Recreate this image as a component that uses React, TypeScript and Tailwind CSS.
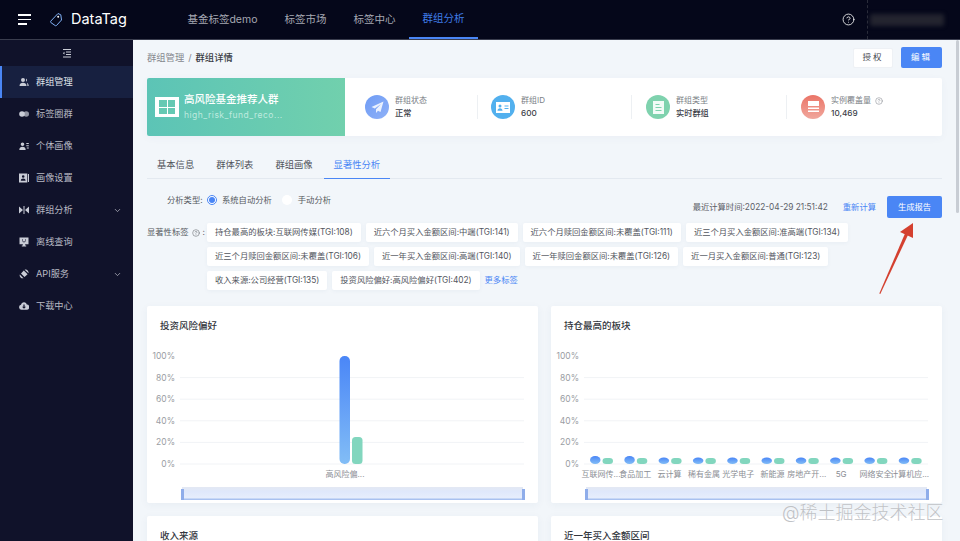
import { ChevronDown, CircleHelp } from "lucide-react";

const fontStack = "font-['Inter','Noto_Sans_CJK_SC',sans-serif]";

const navItems = ["基金标签demo", "标签市场", "标签中心"];

const sideItems = [
    { label: "群组管理", icon: "users", active: true },
    { label: "标签圈群", icon: "circles" },
    { label: "个体画像", icon: "person" },
    { label: "画像设置", icon: "card" },
    { label: "群组分析", icon: "bow", arrow: true },
    { label: "离线查询", icon: "screen" },
    { label: "API服务", icon: "api", arrow: true },
    { label: "下载中心", icon: "cloud" },
];

const tagRows = [
    ["持仓最高的板块:互联网传媒(TGI:108)", "近六个月买入金额区间:中端(TGI:141)", "近六个月赎回金额区间:未覆盖(TGI:111)", "近三个月买入金额区间:准高端(TGI:134)"],
    ["近三个月赎回金额区间:未覆盖(TGI:106)", "近一年买入金额区间:高端(TGI:140)", "近一年赎回金额区间:未覆盖(TGI:126)", "近一月买入金额区间:普通(TGI:123)"],
    ["收入来源:公司经营(TGI:135)", "投资风险偏好:高风险偏好(TGI:402)"],
];

const sectors = ["互联网传...", "食品加工", "云计算", "稀有金属", "光学电子", "新能源", "房地产开...", "5G", "网络安全", "计算机应..."];

function SideIcon({ name }: { name: string }) {
    const c = "#c9ccd6";
    return (
        <svg width="10" height="10" viewBox="0 0 10 10" fill={c} className="shrink-0">
            {name === "users" && <path d="M4 1a2 2 0 1 1 0 4 2 2 0 0 1 0-4zM0.5 9c0-2 1.5-3.2 3.5-3.2S7.5 7 7.5 9zM7 1.5a1.8 1.8 0 0 1 0 3.2zM8 5.8c1 .4 1.7 1.6 1.7 3.2H8.4c0-1.300-.2-2.400-.4-3.200z" />}
            {name === "circles" && <><circle cx="3" cy="5" r="2.800" /><circle cx="7.200" cy="5" r="2.800" fillOpacity="0.7" /></>}
            {name === "person" && <path d="M3.500 1.500a1.800 1.800 0 1 1 0 3.600 1.800 1.800 0 0 1 0-3.600zM0.300 9c0-2 1.300-3.200 3.200-3.200S6.700 7 6.700 9zM7.300 2h2.500v1H7.300zM7.300 4.300h2.500v1H7.300zM7.800 6.600h2v1h-2z" />}
            {name === "card" && <path fillRule="evenodd" d="M0 .5h8.300v9H0zM4.200 2.200a1.300 1.300 0 1 0 0 2.600 1.300 1.300 0 0 0 0-2.600zM1.800 7.800h4.800c0-1.400-1-2.300-2.400-2.300s-2.400.9-2.400 2.300zM9 1h1v8H9z" />}
            {name === "bow" && <path d="M0 1.500l4 3.500-4 3.500zM10 1.500L6 5l4 3.500zM4.500 1h1v8h-1z" />}
            {name === "screen" && <path fillRule="evenodd" d="M.5.500h9v6.800H6.200v1.200h1V9.500H2.800V8.500h1V7.300H.5zM3 2.500v1h1v-1zM6 2.500v1h1v-1zM3 4.500c.5 1 3.500 1 4 0z" />}
            {name === "api" && <path d="M6.500.5a3.200 3.200 0 0 1 3 3.800L5.700 .8c.2-.2.500-.3.800-.3zM4.800 1.500l3.800 3.800L5.500 8 2 4.500zM.8 5.500l3.700 3.700A3 3 0 0 1 .8 5.500z" />}
            {name === "cloud" && <path fillRule="evenodd" d="M5 1.200c1.500 0 2.600 1 2.800 2.400A2.500 2.500 0 0 1 7.500 8.800h-5A2.600 2.600 0 0 1 2 3.700C2.400 2.200 3.500 1.200 5 1.200zM4.400 3.500v2.200H3L5 7.800l2-2.100H5.600V3.500z" />}
        </svg>
    );
}

function Stat({ title, value, color, help, width, dividerRight, children }: { title: string; value: string; color: string; help?: boolean; width: string; dividerRight?: string; children: React.ReactNode }) {
    return (
        <div className={`${width} h-[24px] flex items-center relative`}>
            <div className={`w-[24px] h-[24px] rounded-full flex items-center justify-center shrink-0 ${color}`}>{children}</div>
            <div className="ml-[6px] flex flex-col gap-[2px]">
                <div className="text-[8px] leading-[11px] text-[#7b7f86] flex items-center gap-[4px]">
                    {title}
                    {help && <CircleHelp size={8} strokeWidth={1.500} />}
                </div>
                <div className="text-[8.200px] leading-[11px] font-medium text-[#3c4048]">{value}</div>
            </div>
            {dividerRight && <div className={`absolute top-0 h-[24px] w-px bg-[#edf0f3] ${dividerRight}`} />}
        </div>
    );
}

function Tag({ text }: { text: string }) {
    return <span className="h-[19px] px-[8px] flex items-center bg-white rounded-[2px] text-[8.300px] text-[#52565e] whitespace-nowrap shadow-[0_1px_4px_rgba(40,70,120,0.05)]">{text}</span>;
}

function BarChart({ id, bars, labels }: { id: string; bars: { x: number; blue: number; green: number }[]; labels: { x: number; text: string }[] }) {
    const ticks = [100, 80, 60, 40, 20, 0];
    return (
        <svg width="391" height="156" viewBox="0 0 391 156" className="block">
            <defs>
                <linearGradient id={`${id}Bar`} x1="0" y1="0" x2="0" y2="1">
                    <stop offset="0" stopColor="#4a86f7" />
                    <stop offset="1" stopColor="#82bdf6" />
                </linearGradient>
                <linearGradient id={`${id}Band`} x1="0" y1="0" x2="0" y2="1">
                    <stop offset="0" stopColor="#e3e8f3" />
                    <stop offset="0.35" stopColor="#dfe8fb" />
                    <stop offset="1" stopColor="#e8effd" />
                </linearGradient>
            </defs>
            {ticks.map((t, i) => (
                <g key={t}>
                    <text x="28" y={12 + i * 21.600} textAnchor="end" fontSize="8.500" fill="#9a9da3">{t}%</text>
                    {i > 0 && <line x1="33" x2="377" y1={9 + i * 21.600} y2={9 + i * 21.600} stroke="#f1f3f6" strokeWidth="1" />}
                </g>
            ))}
            {bars.map((b) => (
                <g key={b.x}>
                    <rect x={b.x} y={117 - b.blue} width="10.500" height={b.blue} rx="5" fill={`url(#${id}Bar)`} />
                    <rect x={b.x + 12.500} y={117 - b.green} width="10.500" height={b.green} rx="3.500" fill="#82d6be" />
                </g>
            ))}
            {labels.map((l) => (
                <text key={l.x} x={l.x} y="130" textAnchor="middle" fontSize="8" fill="#8b8e94">{l.text}</text>
            ))}
            <rect x="35" y="140" width="341" height="13" fill={`url(#${id}Band)`} />
            <rect x="35" y="151.500" width="341" height="1.500" fill="#a8c1f0" />
            <rect x="34" y="142" width="3" height="11" fill="#8fadea" />
            <rect x="375" y="142" width="3" height="11" fill="#8fadea" />
        </svg>
    );
}

function Card({ title, children }: { title: string; children?: React.ReactNode }) {
    return (
        <div className="flex-1 bg-white rounded-[2px] shadow-[0_2px_8px_rgba(40,70,120,0.05)]">
            <div className="pl-[13px] pt-[14px] h-[27px] text-[9.500px] leading-[12px] font-medium text-[#33363d] box-content">{title}</div>
            {children}
        </div>
    );
}

export default function App() {
    const rightBars = Array.from({ length: 10 }, (_, i) => ({ x: 39 + i * 34.300, blue: i < 2 ? 8 : 6.500, green: 6 }));
    const rightLabels = sectors.map((text, i) => ({ x: 50 + i * 34.300, text }));

    return (
        <div className={`w-[960px] h-[541px] overflow-hidden relative flex flex-col bg-[#f2f6fa] ${fontStack}`}>
            <header className="h-[40px] shrink-0 bg-[#05071a] border-b border-[#3a3d4e] flex items-center relative">
                <div className="ml-[18px] w-[14px] flex flex-col gap-[3px]">
                    <span className="h-[1.500px] w-[13px] bg-white" />
                    <span className="h-[1.500px] w-[13px] bg-white" />
                    <span className="h-[1.500px] w-[9px] bg-white" />
                </div>
                <svg width="14" height="15" viewBox="0 0 14 15" fill="none" stroke="#7fb0f5" strokeWidth="1" className="ml-[17px]">
                    <path d="M9 1.500l2.800 1.300.7 5.200-5 5.500c-.5.400-1 .4-1.400 0L1.800 10.500c-.4-.5-.3-1 0-1.400z" />
                    <circle cx="9.200" cy="4.800" r="1" fill="#ffffff" stroke="none" />
                </svg>
                <span className="ml-[8px] text-[14.500px] leading-none text-white">DataTag</span>
                <nav className="ml-[47px] h-full flex items-center">
                    {navItems.map((item) => (
                        <span key={item} className="px-[13.500px] text-[10.500px] text-[#a5a8b2] whitespace-nowrap">{item}</span>
                    ))}
                    <span className="h-full px-[13.500px] flex items-center text-[10.500px] text-[#3f7ce6] border-b-2 border-[#4a86f5]">群组分析</span>
                </nav>
                <div className="ml-auto mr-[16px] flex items-center gap-[15px]">
                    <CircleHelp size={13} color="#ffffff" strokeWidth={1.500} />
                    <div className="w-[74px] h-[12px] rounded-[2px] bg-[#23242f] blur-[2px]" />
                </div>
                <div className="absolute left-[867px] top-0 h-full border-l border-dashed border-[#2a2c3a]" />
            </header>

            <div className="flex-1 flex min-h-0">
                <aside className="w-[133px] shrink-0 bg-[#10122a] text-[#b8bac4]">
                    <div className="h-[26px] flex items-center justify-center">
                        <svg width="10" height="9" viewBox="0 0 10 9" stroke="#c9ccd6" strokeWidth="1" fill="none">
                            <path d="M1 .5h8M4 3h5M4 5.500h5M1 8h8" />
                            <path d="M2.500 2.800L.8 4.200l1.700 1.400z" fill="#c9ccd6" stroke="none" />
                        </svg>
                    </div>
                    {sideItems.map((item) => (
                        <div key={item.label} className={`h-[32px] pl-[17px] pr-[11px] flex items-center gap-[7px] text-[9.200px] border-l-2 ${item.active ? "bg-[#172040] border-[#4a86f5] text-[#dfe1e8]" : "border-transparent"}`}>
                            <SideIcon name={item.icon} />
                            <span>{item.label}</span>
                            {item.arrow && <ChevronDown size={9} className="ml-auto" />}
                        </div>
                    ))}
                </aside>

                <main className="flex-1 min-w-0 pl-[14px] pr-[18px]">
                    <div className="h-[38px] pb-[3px] flex items-center justify-between">
                        <div className="flex items-center gap-[4px] text-[9.300px]">
                            <span className="text-[#85888e]">群组管理</span>
                            <span className="text-[#85888e]">/</span>
                            <span className="font-medium text-[#3a3d44]">群组详情</span>
                        </div>
                        <div className="flex items-center gap-[8px]">
                            <button className="w-[40px] h-[20px] bg-white rounded-[2px] text-[8.500px] tracking-[2px] text-[#44474e] border border-[#eef1f5]">授权</button>
                            <button className="w-[41px] h-[21px] bg-[#4a86f5] rounded-[2px] text-[8.500px] tracking-[2px] text-white">编辑</button>
                        </div>
                    </div>

                    <section className="h-[58px] bg-white rounded-[2px] flex items-center shadow-[0_2px_8px_rgba(40,70,120,0.04)]">
                        <div className="w-[198px] h-full rounded-l-[2px] bg-gradient-to-r from-[#5cc4b6] to-[#71d0ad] pl-[8px] flex items-center gap-[5px] shrink-0">
                            <div className="w-[24px] h-[20px] bg-white grid grid-cols-2 grid-rows-2 gap-[1px] px-[4px] py-[3px]">
                                <span className="bg-[#65c9b3]" />
                                <span className="bg-[#65c9b3]" />
                                <span className="bg-[#65c9b3]" />
                                <span className="bg-[#65c9b3]" />
                            </div>
                            <div className="flex flex-col gap-[2px]">
                                <span className="text-[10.500px] leading-[14px] font-medium text-white">高风险基金推荐人群</span>
                                <span className="text-[8.500px] leading-[12px] tracking-[0.500px] text-[#bfeadf]">high_risk_fund_reco...</span>
                            </div>
                        </div>
                        <div className="flex-1 pl-[20px] flex items-center">
                            <Stat width="w-[126px]" dividerRight="right-[13px]" title="群组状态" value="正常" color="bg-gradient-to-br from-[#6f9cf5] to-[#8fb1f7]">
                                <svg width="13" height="13" viewBox="0 0 13 13" fill="#eaf1fe"><path d="M12.500.5L.5 6l3.300 1.500L10 3 5 8.300v3.700l2-2.300 2.500 1.300z" /></svg>
                            </Stat>
                            <Stat width="w-[155px]" dividerRight="right-[14px]" title="群组ID" value="600" color="bg-[#52b0ee]">
                                <svg width="14" height="11" viewBox="0 0 14 11" fill="#ffffff"><path fillRule="evenodd" d="M0 0h14v11H0zM4 2.500a1.500 1.500 0 1 0 0 3 1.500 1.500 0 0 0 0-3zM1.500 8.800h5C6.500 7.300 5.500 6.300 4 6.300S1.500 7.300 1.500 8.800zM8.500 3.500v1h4v-1zM8.500 6v1h4V6z" /></svg>
                            </Stat>
                            <Stat width="w-[155px]" dividerRight="right-[14px]" title="群组类型" value="实时群组" color="bg-[#7fd2ae]">
                                <svg width="11" height="13" viewBox="0 0 11 13" fill="#ffffff"><path fillRule="evenodd" d="M0 0h11v13H0zM2.500 3v1h4V3zM2.500 6v1h6V6zM2.500 9v1h6V9z" fillOpacity="0.900" /></svg>
                            </Stat>
                            <Stat width="w-[125px]" title="实例覆盖量" value="10,469" help color="bg-gradient-to-b from-[#ea7467] to-[#f0a79d]">
                                <svg width="11" height="12" viewBox="0 0 11 12" fill="#ffffff"><path d="M0 0h11v5H0zM0 6.500h11V8H0zM0 9.500h11V11H0z" /></svg>
                            </Stat>
                        </div>
                    </section>

                    <div className="mt-[14px] h-[29px] flex items-end border-b border-[#e3e9f0] pl-[10px] text-[9.300px] text-[#50545b]">
                        <span className="h-[28px] pt-px flex items-center mr-[22px]">基本信息</span>
                        <span className="h-[28px] pt-px flex items-center mr-[22px]">群体列表</span>
                        <span className="h-[28px] pt-px flex items-center mr-[11px]">群组画像</span>
                        <span className="h-[29px] pt-px -mb-px px-[10px] flex items-center text-[#4a86f5] border-b border-[#4a86f5]">显著性分析</span>
                    </div>

                    <div className="mt-[17px] h-[22px] flex items-center text-[8.300px] text-[#565a61]">
                        <div className="mb-[14px] flex items-center">
                            <span className="ml-[20px] w-[40px] whitespace-nowrap">分析类型:</span>
                            <span className="w-[10px] h-[10px] rounded-full border border-[#4a86f5] flex items-center justify-center bg-white">
                                <span className="w-[6px] h-[6px] rounded-full bg-[#4a86f5]" />
                            </span>
                            <span className="ml-[5px]">系统自动分析</span>
                            <span className="ml-[10px] w-[10px] h-[10px] rounded-full bg-white" />
                            <span className="ml-[6px]">手动分析</span>
                        </div>
                        <span className="ml-auto text-[#5c6067]">最近计算时间:2022-04-29 21:51:42</span>
                        <span className="ml-[15px] text-[#4a86f5]">重新计算</span>
                        <button className="ml-[11px] w-[55px] h-[22px] bg-[#4a86f5] rounded-[2px] text-white text-[8.300px]">生成报告</button>
                    </div>

                    <div className="mt-[5px] flex">
                        <div className="w-[60px] h-[19px] shrink-0 flex items-center gap-[3px] text-[8.300px] text-[#565a61] whitespace-nowrap">
                            显著性标签 <CircleHelp size={8} strokeWidth={1.500} /> :
                        </div>
                        <div className="flex flex-col gap-[5px]">
                            {tagRows.map((row, i) => (
                                <div key={i} className="flex items-center gap-[5px] whitespace-nowrap">
                                    {row.map((t) => <Tag key={t} text={t} />)}
                                    {i === 2 && <span className="text-[8.300px] text-[#4a86f5]">更多标签</span>}
                                </div>
                            ))}
                        </div>
                    </div>

                    <div className="mt-[16px] flex gap-[13px]">
                        <Card title="投资风险偏好">
                            <BarChart id="risk" bars={[{ x: 192.500, blue: 108, green: 27 }]} labels={[{ x: 198, text: "高风险偏..." }]} />
                        </Card>
                        <Card title="持仓最高的板块">
                            <BarChart id="sector" bars={rightBars} labels={rightLabels} />
                        </Card>
                    </div>
                    <div className="mt-[13px] flex gap-[13px] h-[60px]">
                        <Card title="收入来源" />
                        <Card title="近一年买入金额区间" />
                    </div>
                </main>
            </div>

            {/* screenshot annotations on top of the page */}
            <svg width="60" height="80" viewBox="0 0 60 80" className="absolute left-[870px] top-[218px]">
                <path d="M9.300 75.500L10.300 76L38 17l-3-1.500z" fill="#d4402f" />
                <path d="M43 5L30 14l13 6z" fill="#d4402f" />
            </svg>
            <div className="absolute left-[956px] top-[40px] w-[3px] h-[173px] rounded-full bg-[#c8cdd4]" />
            <div className="absolute left-[782px] top-[501px] text-[18px] leading-[24px] text-[#bfc2c6] font-light whitespace-nowrap [text-shadow:0_0_1px_#ffffff]">@稀土掘金技术社区</div>
        </div>
    );
}
